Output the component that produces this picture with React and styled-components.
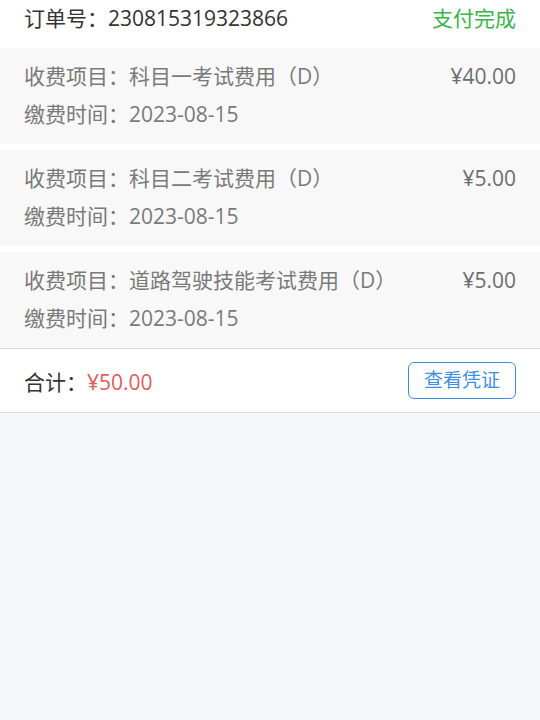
import React from 'react';
import styled, { createGlobalStyle } from 'styled-components';

const GlobalStyle = createGlobalStyle`
  html, body {
    margin: 0;
    padding: 0;
    background-color: #f4f7f8;
  }
  body {
    font-family: "Open Sans", "Noto Sans CJK SC", sans-serif;
  }
`;

const Page = styled.div`
  min-height: 720px;
  background-color: #f4f7f8;
`;

const Header = styled.div`
  display: flex;
  flex-direction: row;
  justify-content: space-between;
  align-items: flex-start;
  height: 48px;
  padding: 0 24px;
  background-color: #fff;
  font-size: 21px;
  line-height: 36px;
  box-sizing: border-box;
`;

const OrderNo = styled.div`
  color: #333;
`;

const Status = styled.div`
  color: #3ab54a;
`;

const List = styled.div`
  display: flex;
  flex-direction: column;
  gap: 6px;
  background-color: #fff;
  border-bottom: 1px solid #dcdcdc;
`;

const Item = styled.div`
  display: flex;
  flex-direction: row;
  justify-content: space-between;
  padding: 9px 24px 11px;
  background-color: #f8f8f8;
  font-size: 21px;
  color: #7a7a7a;
`;

const Lines = styled.div`
  display: flex;
  flex-direction: column;
`;

const Line = styled.div`
  height: 38px;
  line-height: 38px;
`;

const Price = styled.div`
  height: 38px;
  line-height: 38px;
  color: #6e6e6e;
`;

const Footer = styled.div`
  display: flex;
  flex-direction: row;
  justify-content: space-between;
  align-items: center;
  height: 64px;
  padding: 0 24px;
  background-color: #fff;
  border-bottom: 1px solid #dcdcdc;
  box-sizing: border-box;
  font-size: 21px;
`;

const Total = styled.div`
  color: #333;
`;

const Amount = styled.span`
  color: #e25b5b;
`;

const Voucher = styled.div`
  width: 108px;
  height: 37px;
  line-height: 35px;
  box-sizing: border-box;
  border: 1.5px solid #3d8fe6;
  border-radius: 6px;
  color: #3d8fe6;
  font-size: 19px;
  text-align: center;
`;

const items = [
  { name: '科目一考试费用（D）', price: '¥40.00', date: '2023-08-15' },
  { name: '科目二考试费用（D）', price: '¥5.00', date: '2023-08-15' },
  { name: '道路驾驶技能考试费用（D）', price: '¥5.00', date: '2023-08-15' },
];

const App = () => (
  <Page>
    <GlobalStyle />
    <Header>
      <OrderNo>订单号：230815319323866</OrderNo>
      <Status>支付完成</Status>
    </Header>
    <List>
      {items.map(item => (
        <Item key={item.name}>
          <Lines>
            <Line>收费项目：{item.name}</Line>
            <Line>缴费时间：{item.date}</Line>
          </Lines>
          <Price>{item.price}</Price>
        </Item>
      ))}
    </List>
    <Footer>
      <Total>
        合计：<Amount>¥50.00</Amount>
      </Total>
      <Voucher>查看凭证</Voucher>
    </Footer>
  </Page>
);

export default App;
